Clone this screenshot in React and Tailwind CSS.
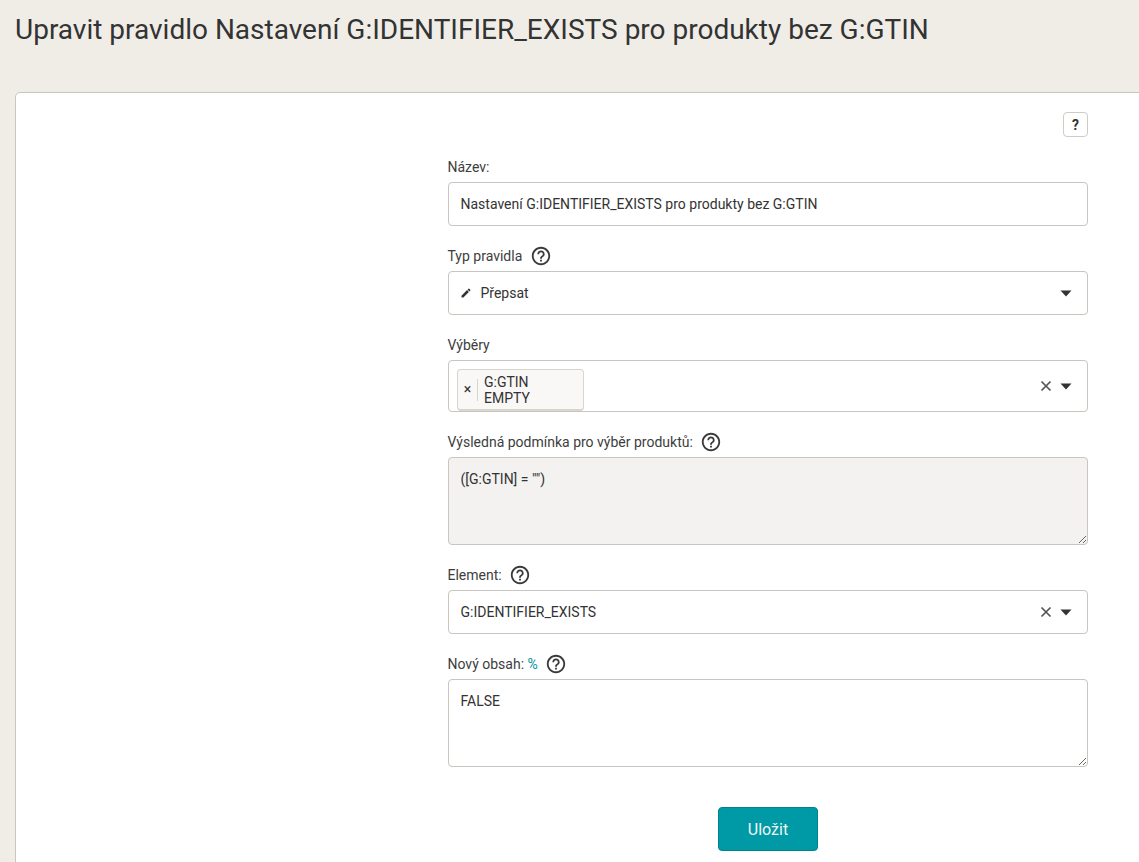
import { MdEdit, MdHelpOutline } from "react-icons/md";

function Help() {
  return <MdHelpOutline size={22} className="mb-[2px] ml-[7.5px] text-[#3a3a3a]" />;
}

function Label({ children, help }) {
  return (
    <div className="mb-[4px] -ml-[0.5px] flex h-[21px] items-center text-sm leading-[21px] text-[#3d3d3d]">
      {children}
      {help && <Help />}
    </div>
  );
}

function Arrow() {
  return (
    <svg width="12" height="7" viewBox="0 0 12 7" className="text-[#333333]">
      <path d="M0.5 0.5h11L6 6.5z" fill="currentColor" />
    </svg>
  );
}

function Clear() {
  return (
    <svg width="12" height="12" viewBox="0 0 12 12" className="mr-2 text-[#555555]">
      <path d="M1.5 1.5l9 9M10.5 1.5l-9 9" stroke="currentColor" strokeWidth="1.7" fill="none" />
    </svg>
  );
}

export default function App() {
  return (
    <div className="flex h-screen flex-col overflow-hidden bg-[#f0ede7] font-['Roboto',sans-serif] text-[#333333]">
      <h1 className="h-[92px] shrink-0 pl-[15px] pt-[12px] text-[28px] leading-[36px] font-normal text-[#333333]">
        Upravit pravidlo Nastavení G:IDENTIFIER_EXISTS pro produkty bez G:GTIN
      </h1>

      <div className="mr-[-20px] mb-[-20px] ml-[15px] flex-1 rounded-tl-[5px] border border-[#c9c5bf] bg-white pt-[19px] pl-[432px]">
        <div className="w-[640px]">
          <div className="flex justify-end">
            <button className="flex h-[25px] w-[25px] items-center justify-center rounded-[4px] border border-[#cfcbc5] bg-white text-sm font-bold text-[#333333]">
              ?
            </button>
          </div>

          <div className="mt-[20px]">
            <Label>Název:</Label>
            <input
              readOnly
              value="Nastavení G:IDENTIFIER_EXISTS pro produkty bez G:GTIN"
              className="block h-[44px] w-full rounded-[4px] border border-[#c9c5bf] bg-white pr-3 pl-[11.5px] text-sm text-[#333333] outline-none"
            />
          </div>

          <div className="mt-[20px]">
            <Label help>Typ pravidla</Label>
            <div className="flex h-[44px] items-center rounded-[4px] border border-[#c9c5bf] bg-white pr-[15px] pl-[11px] text-sm">
              <MdEdit size={12} className="mr-[8.5px] text-[#333333]" />
              <span className="flex-1">Přepsat</span>
              <Arrow />
            </div>
          </div>

          <div className="mt-[20px]">
            <Label>Výběry</Label>
            <div className="flex h-[52px] items-center rounded-[4px] border border-[#c9c5bf] bg-white pr-[15px] pl-2 text-sm">
              <div className="flex h-[42px] w-[127px] items-center self-end rounded-[4px] border border-[#d8d4ce] border-b-2 bg-[#faf8f6]">
                <span className="mb-[2px] w-[19px] text-center text-sm leading-none">×</span>
                <div className="h-[22px] w-px bg-[#d8d4ce]"></div>
                <div className="pl-[6px] leading-[16px]">
                  G:GTIN
                  <br />
                  EMPTY
                </div>
              </div>
              <div className="flex-1"></div>
              <Clear />
              <Arrow />
            </div>
          </div>

          <div className="mt-[20px]">
            <Label help>Výsledná podmínka pro výběr produktů:</Label>
            <textarea
              readOnly
              value={'([G:GTIN] = "")'}
              className="block h-[88px] w-full rounded-[4px] border border-[#c9c5bf] bg-[#f3f2f0] py-[11px] pr-3 pl-[11.5px] text-sm leading-[21px] text-[#333333] outline-none"
            />
          </div>

          <div className="mt-[20px]">
            <Label help>Element:</Label>
            <div className="flex h-[44px] items-center rounded-[4px] border border-[#c9c5bf] bg-white pr-[15px] pl-[11.5px] text-sm">
              <span className="flex-1">G:IDENTIFIER_EXISTS</span>
              <Clear />
              <Arrow />
            </div>
          </div>

          <div className="mt-[20px]">
            <Label help>
              Nový obsah:&nbsp;<span className="text-[#00919c]">%</span>
            </Label>
            <textarea
              readOnly
              value="FALSE"
              className="block h-[88px] w-full rounded-[4px] border border-[#c9c5bf] bg-white py-[11px] pr-3 pl-[11.5px] text-sm leading-[21px] text-[#333333] outline-none"
            />
          </div>

          <div className="mt-[40px] flex justify-center">
            <button className="h-[44px] w-[100px] rounded-[4px] border border-[#00838d] bg-[#009aa6] pt-[2px] text-base text-[#f0f5f5]">
              Uložit
            </button>
          </div>
        </div>
      </div>
    </div>
  );
}
